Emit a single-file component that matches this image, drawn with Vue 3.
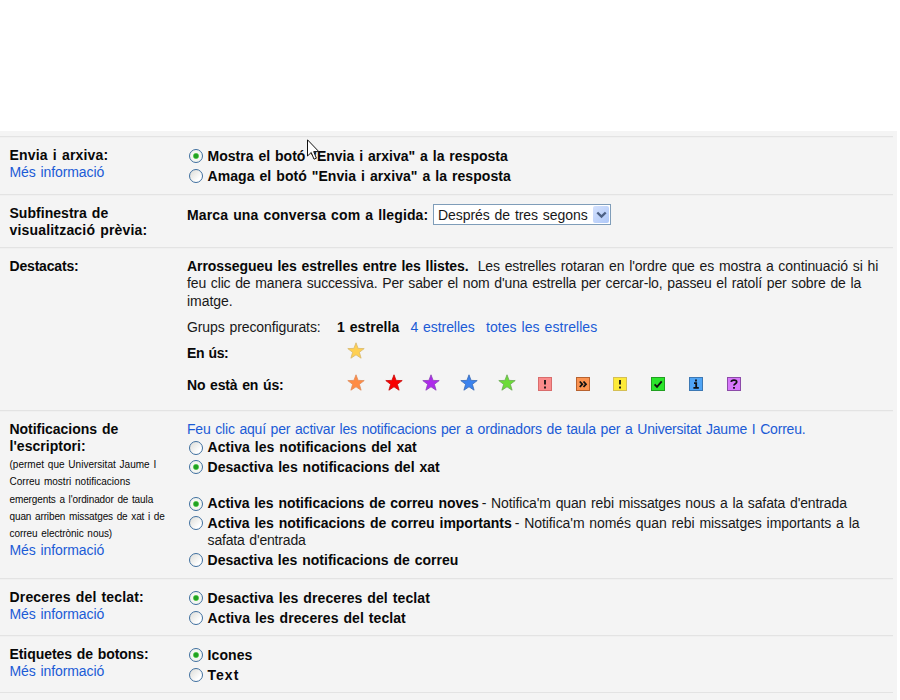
<script setup>
// Spreads a line's letters so that it occupies the given width,
// less the side bearings of its outer letters.
const BEARING = 1.3
const vFit = {
  mounted(el, { value }) {
    const natural = el.getBoundingClientRect().width
    const gaps = el.textContent.length - 1
    el.style.letterSpacing = `${((value - BEARING - natural) / gaps).toFixed(3)}px`
  },
}

const STAR = 'M9 .8 11.1 6.4 17.2 6.6 12.4 10.3 14.1 16.2 9 12.8 3.9 16.2 5.6 10.3 .8 6.6 6.9 6.4Z'
const stars = [
  { fill: '#ff8c45', edge: '#e08a58' },
  { fill: '#f80000', edge: '#c80808' },
  { fill: '#ad2bea', edge: '#8c3fb8' },
  { fill: '#3b82ee', edge: '#3768b4' },
  { fill: '#6cdc38', edge: '#6aa852' },
]
const badges = [
  { fill: '#fa8b8b', edge: '#d96c6c', d: 'M7 3V7.6M7 9.4V11.4' },
  { fill: '#fb9350', edge: '#b8622f', d: 'M3.8 4.5 6.3 7.2 3.8 10M7.5 4.5 10 7.2 7.5 10' },
  { fill: '#fdea38', edge: '#d5bf55', d: 'M7 3V7.6M7 9.4V11.4' },
  { fill: '#2be52b', edge: '#20a020', d: 'M3.6 7.3 6 9.8 10.7 4.4' },
  { fill: '#50a5f5', edge: '#3c78b4', d: 'M7 2.6V4.4M5 6.2H7.2V10.6M4.4 10.8H9.8' },
  { fill: '#d777fa', edge: '#8c4ba8', d: 'M4.2 4.8C4.4 2.6 9.8 2.4 9.7 5 9.6 6.8 7 6.6 7 8.6M7 9.9V11.7' },
]

const mailOptions = [
  { on: true, label: 'Activa les notificacions de correu noves', w: 272.5, note: "- Notifica'm quan rebi missatges nous a la safata d'entrada", nw: 366.5 },
  { on: false, label: 'Activa les notificacions de correu importants', w: 305.5, note: "- Notifica'm només quan rebi missatges importants a la", nw: 346 },
]
const hint = [
  ['(permet que Universitat Jaume I', 148],
  ['Correu mostri notificacions', 122],
  ["emergents a l'ordinador de taula", 145],
  ['quan arriben missatges de xat i de', 156.5],
  ['correu electrònic nous)', 104],
]
</script>

<template>
  <main class="page">
    <div class="panel">
      <section class="row send">
        <div class="name">
          <div><b v-fit="100">Envia i arxiva:</b></div>
          <div><a v-fit="96">Més informació</a></div>
        </div>
        <div class="field">
          <div class="option"><i class="radio on"></i><b v-fit="301.5">Mostra el botó "Envia i arxiva" a la resposta</b></div>
          <div class="option"><i class="radio"></i><b v-fit="304.5">Amaga el botó "Envia i arxiva" a la resposta</b></div>
        </div>
      </section>

      <section class="row preview">
        <div class="name">
          <div><b v-fit="100">Subfinestra de</b></div>
          <div><b v-fit="139">visualització prèvia:</b></div>
        </div>
        <div class="field choose">
          <div class="prompt"><b v-fit="242.5">Marca una conversa com a llegida:</b></div>
          <div class="select">
            <span v-fit="151">Després de tres segons</span>
            <span class="arrow"><svg width="11" height="8" viewBox="0 0 11 8"><path d="M1.3 1.5 5.5 5.6 9.7 1.5" /></svg></span>
          </div>
        </div>
      </section>

      <section class="row starred">
        <div class="name"><div><b v-fit="70.5">Destacats:</b></div></div>
        <div class="field">
          <div class="lead"><b v-fit="283">Arrossegueu les estrelles entre les llistes.</b><span v-fit="402">Les estrelles rotaran en l'ordre que es mostra a continuació si hi</span></div>
          <div><span v-fit="675.5">feu clic de manera successiva. Per saber el nom d'una estrella per cercar-lo, passeu el ratolí per sobre de la</span></div>
          <div><span v-fit="47">imatge.</span></div>
          <div class="groups">
            <span class="caption"><span v-fit="135">Grups preconfigurats:</span></span>
            <b class="one"><span v-fit="63.5">1 estrella</span></b>
            <a class="four"><span v-fit="65.5">4 estrelles</span></a>
            <a><span v-fit="112.5">totes les estrelles</span></a>
          </div>
          <div class="icons used">
            <span class="caption"><b v-fit="43">En ús:</b></span>
            <svg class="star" viewBox="0 0 18 18"><path :d="STAR" fill="#ffd052" stroke="#d8b76a" /></svg>
          </div>
          <div class="icons unused">
            <span class="caption"><b v-fit="98">No està en ús:</b></span>
            <svg v-for="s in stars" :key="s.fill" class="star" viewBox="0 0 18 18"><path :d="STAR" :fill="s.fill" :stroke="s.edge" /></svg>
            <svg v-for="b in badges" :key="b.fill" class="badge" viewBox="0 0 14 14">
              <rect x=".5" y=".5" width="13" height="13" :fill="b.fill" :stroke="b.edge" />
              <path :d="b.d" class="mark" />
            </svg>
          </div>
        </div>
      </section>

      <section class="row desktop">
        <div class="name">
          <div><b v-fit="110">Notificacions de</b></div>
          <div><b v-fit="77.5">l'escriptori:</b></div>
          <div v-for="[text, w] in hint" :key="text" class="small"><span v-fit="w">{{ text }}</span></div>
          <div class="more"><a v-fit="96">Més informació</a></div>
        </div>
        <div class="field">
          <div><a v-fit="620">Feu clic aquí per activar les notificacions per a ordinadors de taula per a Universitat Jaume I Correu.</a></div>
          <div class="chat">
            <div class="option"><i class="radio"></i><b v-fit="210.5">Activa les notificacions del xat</b></div>
            <div class="option"><i class="radio on"></i><b v-fit="233.5">Desactiva les notificacions del xat</b></div>
          </div>
          <div class="mail">
            <div v-for="o in mailOptions" :key="o.label" class="option">
              <i class="radio" :class="{ on: o.on }"></i><b v-fit="o.w">{{ o.label }}</b><span class="note"><span v-fit="o.nw">{{ o.note }}</span></span>
            </div>
            <div class="wrapped"><span v-fit="99.5">safata d'entrada</span></div>
            <div class="option"><i class="radio"></i><b v-fit="252">Desactiva les notificacions de correu</b></div>
          </div>
        </div>
      </section>

      <section class="row keys">
        <div class="name">
          <div><b v-fit="135.5">Dreceres del teclat:</b></div>
          <div><a v-fit="96">Més informació</a></div>
        </div>
        <div class="field">
          <div class="option"><i class="radio on"></i><b v-fit="223.5">Desactiva les dreceres del teclat</b></div>
          <div class="option"><i class="radio"></i><b v-fit="199.5">Activa les dreceres del teclat</b></div>
        </div>
      </section>

      <section class="row labels">
        <div class="name">
          <div><b v-fit="140.5">Etiquetes de botons:</b></div>
          <div><a v-fit="96">Més informació</a></div>
        </div>
        <div class="field">
          <div class="option"><i class="radio on"></i><b v-fit="46">Icones</b></div>
          <div class="option"><i class="radio"></i><b v-fit="32">Text</b></div>
        </div>
      </section>
      <div class="row end"></div>

      <svg class="cursor" width="13" height="22" viewBox="0 0 13 22">
        <path d="M.5 .8V17L4.2 13.5 7 20.2 9.4 19.2 6.7 12.6H11.8Z" />
      </svg>
    </div>
  </main>
</template>

<style>
body { background: #fff; }
</style>

<style scoped>
.page {
  box-sizing: border-box;
  height: 700px;
  padding-top: 131px;
  overflow: hidden;
  font: 14px/17.4px "Liberation Sans", Arial, sans-serif;
  word-spacing: 1px;
  color: #181818;
}
.panel {
  position: relative;
  box-sizing: border-box;
  width: 897px;
  height: 569px;
  padding-top: 5px;
  background: #f4f4f4;
}
.row {
  display: flex;
  box-sizing: border-box;
  width: 893px;
  border-top: 1px solid #e3e3e3;
  box-shadow: inset 0 1px #f0f0f0;
  white-space: nowrap;
}
.name {
  flex: none;
  box-sizing: border-box;
  width: 187px;
  padding: 10px 0 0 9.5px;
}
.field { padding-top: 10px; }
b { color: #080808; }
a { color: #1b5bd6; }
.send { height: 58px; }
.preview { height: 53px; }
.starred { height: 163px; }
.desktop { height: 168px; }
.keys, .labels { height: 57px; }

.option {
  display: flex;
  align-items: center;
  height: 19.5px;
  padding-left: 2px;
}
.radio {
  flex: none;
  box-sizing: border-box;
  width: 14px;
  height: 14px;
  margin: -1px 4.6px 0 0;
  border: 1.5px solid #3f6f9f;
  border-radius: 50%;
  background: linear-gradient(135deg, #dcdcd7, #fff 75%);
}
.radio.on {
  background: radial-gradient(circle, #21a121 0 2px, #55c94f 2.5px, #f4f6f1 3.5px);
}
.choose {
  display: flex;
  align-items: flex-start;
  padding-top: 12px;
}
.prompt { width: 246px; }
.select {
  display: flex;
  justify-content: space-between;
  box-sizing: border-box;
  width: 178px;
  height: 21px;
  margin-top: -3px;
  padding: 1px 1px 1px 4px;
  border: 1px solid #7f9db9;
  background: #fff;
  line-height: 19px;
}
.arrow {
  display: flex;
  align-items: center;
  justify-content: center;
  width: 16px;
  height: 17px;
  border-radius: 2px;
  background: linear-gradient(135deg, #d4e1fd, #afc8f8);
}
.arrow path { fill: none; stroke: #4d6185; stroke-width: 2.4; }

.lead { display: flex; gap: 9px; }
.caption { flex: none; width: 150px; }
.groups { display: flex; margin-top: 9px; }
.one { width: 73.5px; }
.four { width: 75.5px; }
.icons { display: flex; }
.used { margin-top: 8.4px; }
.unused { margin-top: 14.6px; }
.star {
  flex: none;
  width: 18px;
  height: 18px;
  margin: -3px 9.9px 0 9.9px;
  stroke-width: .8;
}
.badge {
  flex: none;
  width: 14px;
  height: 14px;
  margin: 0 11.9px;
}
.mark { fill: none; stroke: #111; stroke-width: 1.8; }

.small { font-size: 10px; color: #080808; }
.more { margin-top: -1px; }
.mail { margin-top: 17px; }
.note { margin-left: 3px; }
.wrapped { height: 17.4px; padding-left: 20.6px; line-height: 15px; }

.cursor { position: absolute; left: 307px; top: 8px; }
.cursor path { fill: #fff; stroke: #111; stroke-width: 1; }
</style>
